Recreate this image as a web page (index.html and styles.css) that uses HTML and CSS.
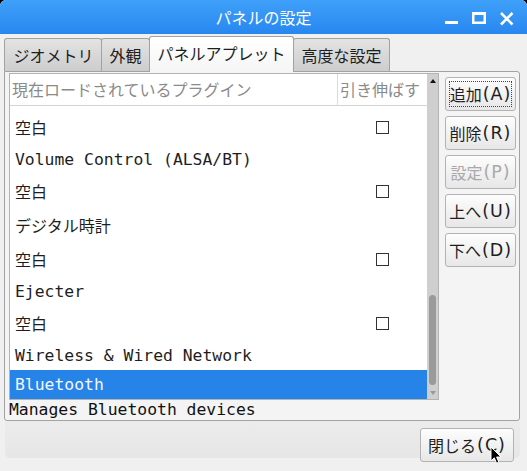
FILE: index.html
```html
<!DOCTYPE html>
<html lang="ja">
<head>
<meta charset="utf-8">
<title>パネルの設定</title>
<link rel="stylesheet" href="styles.css">
</head>
<body>
<div class="window">
  <header class="titlebar">
    <h1 class="title">パネルの設定</h1>
    <svg class="controls" width="69" height="16" viewBox="0 0 69 16">
      <rect x="0" y="12" width="13" height="3" fill="#fff"/>
      <path fill="#fff" fill-rule="evenodd" d="M27 3h14v12h-14z M29.5 6h9v6.5h-9z"/>
      <path stroke="#fff" stroke-width="2.6" d="M56 4 L67.5 15.5 M67.5 4 L56 15.5"/>
    </svg>
  </header>
  <div class="body">
    <div class="notebook">
      <div class="tabs">
        <div class="tab">ジオメトリ</div>
        <div class="tab">外観</div>
        <div class="tab active">パネルアプレット</div>
        <div class="tab">高度な設定</div>
      </div>
      <div class="page">
        <div class="left">
          <div class="list">
            <div class="tree">
              <div class="thead">
                <div class="col1">現在ロードされているプラグイン</div>
                <div class="col2">引き伸ばす</div>
              </div>
              <div class="rows">
                <div class="row cjk"><span class="name">空白</span><span class="check"><i class="box"></i></span></div>
                <div class="row"><span class="name">Volume Control (ALSA/BT)</span></div>
                <div class="row cjk"><span class="name">空白</span><span class="check"><i class="box"></i></span></div>
                <div class="row cjk"><span class="name">デジタル時計</span></div>
                <div class="row cjk"><span class="name">空白</span><span class="check"><i class="box"></i></span></div>
                <div class="row"><span class="name">Ejecter</span></div>
                <div class="row cjk"><span class="name">空白</span><span class="check"><i class="box"></i></span></div>
                <div class="row"><span class="name">Wireless &amp; Wired Network</span></div>
                <div class="row sel"><span class="name">Bluetooth</span></div>
              </div>
            </div>
            <div class="scrollbar">
              <i class="arrow-up"></i>
              <span class="track"></span>
              <span class="thumb"></span>
              <i class="arrow-down"></i>
            </div>
          </div>
          <div class="desc">Manages Bluetooth devices</div>
        </div>
        <div class="buttons">
          <button class="btn focus">追加<span class="mn">(A)</span></button>
          <button class="btn">削除<span class="mn">(R)</span></button>
          <button class="btn" disabled>設定<span class="mn">(P)</span></button>
          <button class="btn">上へ<span class="mn">(U)</span></button>
          <button class="btn">下へ<span class="mn">(D)</span></button>
        </div>
      </div>
    </div>
    <div class="actions">
      <button class="btn close">閉じる<span class="mn">(C)</span></button>
      <svg class="cursor" width="13" height="19" viewBox="0 0 13 19">
        <path d="M1 1 L1 15 L4.3 11.8 L6.6 17.2 L8.8 16.2 L6.6 11 L11 11 Z" fill="#000" stroke="#fff" stroke-width="1" stroke-linejoin="round"/>
      </svg>
    </div>
  </div>
</div>
</body>
</html>
```

FILE: styles.css
```css
* { box-sizing: border-box; margin: 0; padding: 0; }
html, body { width: 527px; height: 471px; overflow: hidden; background: #000; }
body {
  font-family: "Noto Sans CJK JP", "DejaVu Sans", sans-serif;
  font-size: 16px;
  color: #1e1e1e;
}
.window {
  width: 527px; height: 471px;
  background: #f0f0f0;
  border-radius: 6px 6px 0 0;
  overflow: hidden;
  display: flex; flex-direction: column;
}
.titlebar {
  height: 34px; flex: none;
  background: linear-gradient(#3fa0fa, #2787ef);
  display: grid;
  grid-template-columns: 1fr auto 1fr;
  align-items: center;
  color: #fff;
}
.title { grid-column: 2; font-size: 16px; font-weight: normal; line-height: 34px; }
.controls { grid-column: 3; justify-self: end; margin-right: 13px; overflow: visible; }

.body { flex: 1; display: flex; flex-direction: column; padding-top: 2px; }
.notebook { margin-left: 4px; width: 516px; }
.tabs { display: flex; align-items: flex-end; height: 35px; position: relative; z-index: 1; }
.tab {
  height: 33px;
  padding: 0 7.5px;
  border: 1px solid #a2a2a2; border-bottom: none;
  border-radius: 3px 3px 0 0;
  background: linear-gradient(#e3e3e3, #cdcdcd);
  line-height: 32px;
  margin-right: -1px;
  white-space: nowrap;
}
.tab:first-child { padding-left: 8.5px; }
.tab.active {
  height: 36px; margin-bottom: -1px;
  background: linear-gradient(#ffffff, #f5f5f5);
  line-height: 32px;
}
.page {
  height: 350px;
  border: 1px solid #a2a2a2;
  border-radius: 0 3px 3px 3px;
  background: #f4f4f4;
  display: flex; gap: 6px;
  padding: 1px 3px 0 4px;
}
.left { width: 430px; display: flex; flex-direction: column; }
.list { height: 327px; flex: none; border: 1px solid #b3b3b3; background: #fff; display: flex; }
.tree { flex: 1; min-width: 0; display: flex; flex-direction: column; overflow: hidden; }
.thead {
  height: 32px; flex: none; display: flex;
  border-bottom: 1px solid #d4d4d4;
  color: #8a8a8a; line-height: 31px; white-space: nowrap;
}
.col1 { width: 327px; padding-left: 2px; }
.col2 { flex: 1; border-left: 1px solid #dcdcdc; padding-left: 2px; }
.rows {
  flex: 1; padding-top: 4px;
  font-family: "DejaVu Sans Mono", "Noto Sans CJK JP", monospace;
  font-size: 16.4px;
}
.row { height: 30px; display: flex; align-items: center; }
.row.cjk { height: 34px; }
.row.cjk .name { font-family: "Noto Sans CJK JP", sans-serif; font-size: 16px; }
.row.sel { height: 29px; background: #2683e8; color: #f2f7ff; }
.name { width: 327px; flex: none; padding-left: 5px; white-space: nowrap; }
.check { flex: 1; display: flex; justify-content: center; }
.box { display: block; width: 13px; height: 13px; border: 1.5px solid #2e3436; }

.scrollbar { width: 11px; flex: none; background: #cfcfcf; display: flex; flex-direction: column; align-items: center; }
.arrow-up { display: block; margin-top: 5px; width: 0; height: 0; border-left: 3.5px solid transparent; border-right: 3.5px solid transparent; border-bottom: 4px solid #111; }
.track { flex: 1; }
.thumb { display: block; width: 7px; height: 90px; background: #9a9a9a; border-radius: 3.5px; }
.arrow-down { display: block; margin: 6px 0 4px; width: 0; height: 0; border-left: 3.5px solid transparent; border-right: 3.5px solid transparent; border-top: 4px solid #9a9a9a; }

.desc {
  height: 20px;
  font-family: "DejaVu Sans Mono", monospace;
  font-size: 16.4px; line-height: 20px;
  color: #111; white-space: nowrap;
}
.buttons { width: 71px; flex: none; display: flex; flex-direction: column; gap: 5px; padding-top: 4px; }
.btn {
  height: 34px;
  border: 1px solid #b3b3b3; border-radius: 3px;
  background: linear-gradient(#fdfdfd, #e7e7e7);
  font-family: "Noto Sans CJK JP", "DejaVu Sans", sans-serif;
  font-size: 16px; color: #1e1e1e;
  display: flex; align-items: center; justify-content: center;
  position: relative;
  white-space: nowrap;
}
.mn { font-family: "DejaVu Sans", sans-serif; font-size: 17.5px; letter-spacing: 1px; margin-left: 1px; }
.btn.focus::after { content: ""; position: absolute; inset: 3px; border: 1px dotted #444; }
.btn:disabled { color: #a9a9a9; }

.actions {
  margin: 0 7px 0 5px;
  height: 37px;
  background: linear-gradient(#ececec, #e6e6e6);
  border-radius: 0 0 5px 5px;
  display: flex; justify-content: flex-end;
  padding: 7px 6px 0 0;
  position: relative;
}
.close { width: 94px; }
.cursor { position: absolute; left: 485px; top: 25px; }
```
